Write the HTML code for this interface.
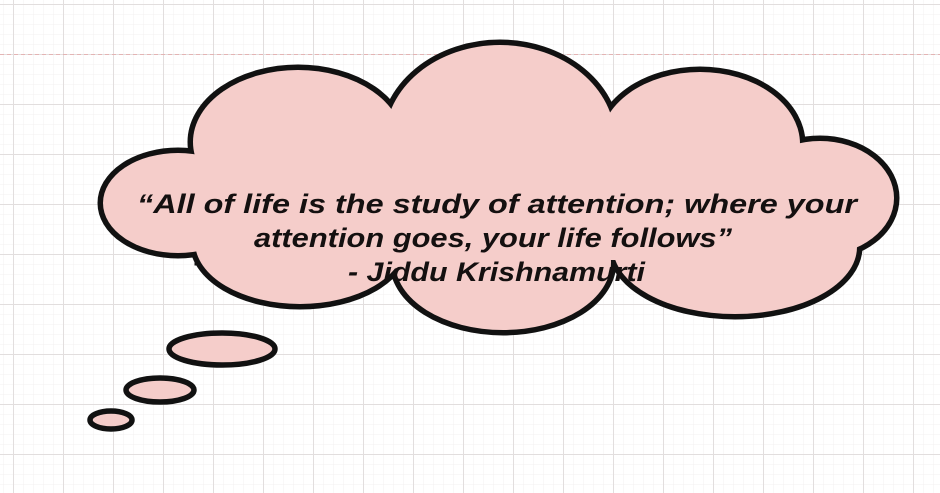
<!DOCTYPE html>
<html><head><style>
html,body{margin:0;padding:0;background:#fff;}
svg{display:block;}
</style></head><body>
<svg width="940" height="493" viewBox="0 0 940 493" xmlns="http://www.w3.org/2000/svg">
<defs>
<pattern id="minor" width="10" height="10" patternUnits="userSpaceOnUse" x="3" y="4">
<path d="M0 0H10M0 0V10" stroke="#f3f0f0" stroke-width="1" fill="none"/>
</pattern>
<pattern id="major" width="50" height="50" patternUnits="userSpaceOnUse" x="13" y="4">
<path d="M0 0.5H50M0.5 0V50" stroke="#e2dede" stroke-width="1" fill="none"/>
</pattern>
</defs>
<rect width="940" height="493" fill="#fff"/>
<rect width="940" height="493" fill="url(#minor)"/>
<rect width="940" height="493" fill="url(#major)"/>
<line x1="0" y1="54.5" x2="940" y2="54.5" stroke="#e4b4b4" stroke-width="1" stroke-dasharray="4 3"/>
<g id="cloud">
<g fill="#111" stroke="#111" stroke-width="11">
<ellipse cx="500" cy="140" rx="115" ry="95"/>
<ellipse cx="298" cy="142" rx="105" ry="72"/>
<ellipse cx="700" cy="144" rx="100" ry="72"/>
<ellipse cx="178" cy="203" rx="75" ry="50"/>
<ellipse cx="820" cy="198" rx="74" ry="57"/>
<ellipse cx="300" cy="242" rx="105" ry="62"/>
<ellipse cx="503" cy="262" rx="108" ry="68"/>
<ellipse cx="735" cy="247" rx="122" ry="67"/>
<rect x="200" y="150" width="600" height="110"/>
</g>
<g fill="#f5cdca">
<ellipse cx="500" cy="140" rx="115" ry="95"/>
<ellipse cx="298" cy="142" rx="105" ry="72"/>
<ellipse cx="700" cy="144" rx="100" ry="72"/>
<ellipse cx="178" cy="203" rx="75" ry="50"/>
<ellipse cx="820" cy="198" rx="74" ry="57"/>
<ellipse cx="300" cy="242" rx="105" ry="62"/>
<ellipse cx="503" cy="262" rx="108" ry="68"/>
<ellipse cx="735" cy="247" rx="122" ry="67"/>
<rect x="200" y="150" width="600" height="110"/>
</g>
</g>
<g fill="#f5cdca" stroke="#111" stroke-width="5.5">
<ellipse cx="222" cy="349" rx="53" ry="16"/>
<ellipse cx="160" cy="390" rx="34" ry="12"/>
<ellipse cx="111" cy="420" rx="21" ry="9"/>
</g>
<g font-family="'Comic Sans MS','Liberation Sans',sans-serif" font-style="italic" font-weight="bold" font-size="27" fill="#141010">
<text x="137" y="213" textLength="720" lengthAdjust="spacingAndGlyphs">“All of life is the study of attention; where your</text>
<text x="254" y="247" textLength="478" lengthAdjust="spacingAndGlyphs">attention goes, your life follows”</text>
<text x="348" y="281" textLength="297" lengthAdjust="spacingAndGlyphs">- Jiddu Krishnamurti</text>
</g>
</svg>
</body></html>
